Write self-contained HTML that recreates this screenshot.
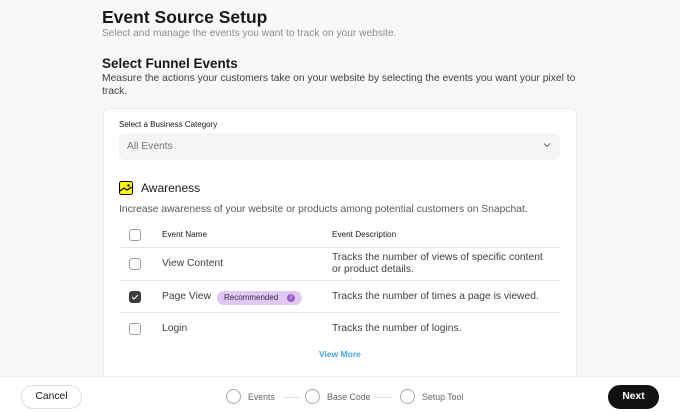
<!DOCTYPE html>
<html><head><meta charset="utf-8"><style>
*{margin:0;padding:0;box-sizing:border-box}
body{width:680px;height:412px;overflow:hidden;background:#f8f8f8;font-family:"Liberation Sans",sans-serif;position:relative;color:#16191c}
.a{position:absolute;white-space:nowrap}
.cb{position:absolute;width:12px;height:12px;border:1px solid #9a9ea2;border-radius:3px;background:#fff}
.ln{position:absolute;left:119px;width:441px;height:1px;background:#e6e7e8}
.circ{position:absolute;width:15px;height:15px;border:1px solid #a8abae;border-radius:50%;background:#fff}
.t{font-size:10.3px;color:#3d4044}
</style></head><body>
<div class="a" style="left:102px;top:7px;font-size:17.5px;font-weight:bold">Event Source Setup</div>
<div class="a" style="left:102px;top:28px;font-size:10.2px;color:#8a8d90">Select and manage the events you want to track on your website.</div>
<div class="a" style="left:102px;top:56px;font-size:13.5px;font-weight:bold">Select Funnel Events</div>
<div class="a" style="left:102px;top:72px;font-size:10.3px;color:#3d4044;line-height:13px;white-space:normal;width:480px">Measure the actions your customers take on your website by selecting the events you want your pixel to track.</div>
<div style="position:absolute;left:103px;top:108px;width:474px;height:272px;background:#fff;border:1px solid #ececec;border-radius:6px"></div>
<div class="a" style="left:119px;top:120px;font-size:8px">Select a Business Category</div>
<div style="position:absolute;left:119px;top:133px;width:441px;height:27px;background:#f5f5f5;border-radius:6px"></div>
<div class="a" style="left:127px;top:141px;font-size:10.3px;color:#777">All Events</div>
<svg class="a" style="left:543px;top:142px" width="8" height="6"><path d="M1 1.5L4 4.5 7 1.5" fill="none" stroke="#666" stroke-width="1"/></svg>
<svg class="a" style="left:119px;top:181px" width="14" height="14"><rect x="0.5" y="0.5" width="13" height="13" rx="2" fill="#fffc00" stroke="#000"/><path d="M1 10L5 7 8 9 13 6" fill="none" stroke="#000" stroke-width="1.2"/><circle cx="9.5" cy="4.5" r="1.2" fill="#000"/></svg>
<div class="a" style="left:141px;top:181px;font-size:12px">Awareness</div>
<div class="a" style="left:119px;top:204px;font-size:10.3px;color:#55585c">Increase awareness of your website or products among potential customers on Snapchat.</div>
<div class="cb" style="left:129px;top:229px"></div>
<div class="a" style="left:162px;top:230px;font-size:8.2px">Event Name</div>
<div class="a" style="left:332px;top:230px;font-size:8.2px">Event Description</div>
<div class="ln" style="top:247px"></div>
<div class="cb" style="left:129px;top:258px"></div>
<div class="a t" style="left:162px;top:258px">View Content</div>
<div class="a t" style="left:332px;top:252px;line-height:12px">Tracks the number of views of specific content<br>or product details.</div>
<div class="ln" style="top:280px"></div>
<div class="cb" style="left:129px;top:291px;background:#3a3c3e;border-color:#3a3c3e"><svg width="10" height="10" style="position:absolute;left:0;top:0"><path d="M2 5L4 7 8 3" fill="none" stroke="#fff" stroke-width="1"/></svg></div>
<div class="a t" style="left:162px;top:291px">Page View</div>
<div class="a" style="left:217px;top:291px;width:85px;height:14px;background:#e1c8f2;border-radius:7px;font-size:8px;line-height:14px;padding-left:7px;color:#3a2d45">Recommended<span style="position:absolute;left:70px;top:3px;width:8px;height:8px;border-radius:50%;background:#9a5fcc;color:#fff;font-size:6px;line-height:8px;text-align:center;font-style:italic">i</span></div>
<div class="a t" style="left:332px;top:291px">Tracks the number of times a page is viewed.</div>
<div class="ln" style="top:312px"></div>
<div class="cb" style="left:129px;top:323px"></div>
<div class="a t" style="left:162px;top:323px">Login</div>
<div class="a t" style="left:332px;top:323px">Tracks the number of logins.</div>
<div class="a" style="left:319px;top:349px;font-size:8.5px;color:#3aa6ee;font-weight:bold">View More</div>
<div style="position:absolute;left:0;top:376px;width:680px;height:36px;background:#fff;border-top:1px solid #eee"></div>
<div class="a" style="left:21px;top:385px;width:61px;height:24px;border:1px solid #ddd;border-radius:12px;font-size:10.3px;line-height:22px;text-align:center">Cancel</div>
<div class="circ" style="left:226px;top:389px"></div><div class="a" style="left:248px;top:392px;font-size:8.8px;color:#666">Events</div>
<div class="a" style="left:283px;top:397px;width:17px;height:1px;background:#e2e2e2"></div>
<div class="circ" style="left:305px;top:389px"></div><div class="a" style="left:327px;top:392px;font-size:8.8px;color:#666">Base Code</div>
<div class="a" style="left:376px;top:397px;width:17px;height:1px;background:#e2e2e2"></div>
<div class="circ" style="left:400px;top:389px"></div><div class="a" style="left:422px;top:392px;font-size:8.8px;color:#666">Setup Tool</div>
<div class="a" style="left:608px;top:385px;width:51px;height:24px;background:#111;border-radius:12px;font-size:10.3px;font-weight:bold;color:#fff;line-height:24px;text-align:center">Next</div>
</body></html>
